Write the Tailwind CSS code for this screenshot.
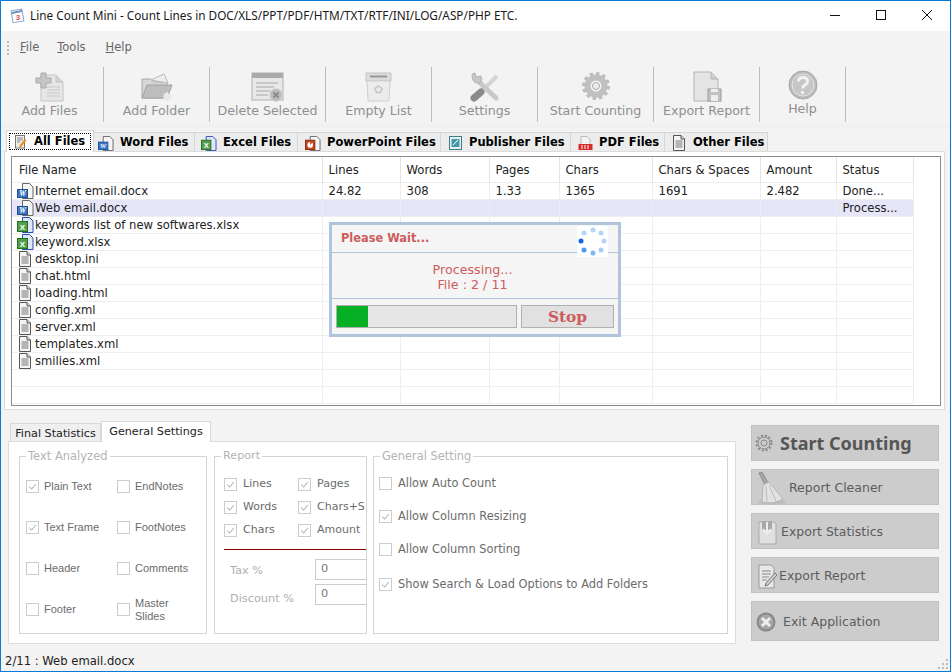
<!DOCTYPE html>
<html>
<head>
<meta charset="UTF-8">
<title>Line Count Mini</title>
<script src="https://cdn.jsdelivr.net/npm/@tailwindcss/browser@4"></script>
</head>
<body class="m-0 overflow-hidden bg-[#f3f3f3]">

<!-- shared icons -->
<svg class="hidden">
  <symbol id="doc-lines" viewBox="0 0 14 16">
    <path d="M1.5.5h7.5l3.500 3.500v11.500h-11z" fill="#f4f4f4" stroke="#555"/>
    <path d="M9 .5v3.500h3.500" fill="#ddd" stroke="#555"/>
    <path d="M3.500 6h7M3.500 8h7M3.500 10h7M3.500 12h7" stroke="#777"/>
  </symbol>
  <symbol id="doc-word" viewBox="0 0 17 16">
    <path d="M5.500.5h7l3.500 3.500v11.500h-10.500z" fill="#f6f6f6" stroke="#666"/>
    <rect x="0.500" y="6.500" width="10" height="8" fill="#3f78c2" stroke="#1f4f96"/>
    <text x="5.500" y="13" text-anchor="middle" font-size="7.500" font-family="Liberation Serif" font-style="italic" font-weight="700" fill="#fff">W</text>
  </symbol>
  <symbol id="doc-excel" viewBox="0 0 17 16">
    <path d="M5.500.5h7l3.500 3.500v11.500h-10.500z" fill="#dfe6f6" stroke="#2a4fb0"/>
    <rect x="0.500" y="4.500" width="10" height="10" fill="#54a04a" stroke="#20702a"/>
    <text x="5.500" y="12.500" text-anchor="middle" font-size="8" font-family="Liberation Sans" font-weight="700" fill="#fff">X</text>
  </symbol>
  <symbol id="check" viewBox="0 0 13 13">
    <path d="M2.500 6.500l3 3 5-6" fill="none" stroke="#b4b4b4" stroke-width="1.200"/>
  </symbol>
</svg>

<div class="w-[951px] h-[672px] flex flex-col overflow-hidden border border-[#0a7ad6] bg-[#f3f3f3] font-['DejaVu_Sans',sans-serif] text-[12px] relative">

  <!-- title bar -->
  <div class="h-[30px] shrink-0 bg-white flex items-center">
    <svg class="ml-[9px] w-[15px] h-[16px]" viewBox="0 0 15 16">
      <rect x="2" y="2" width="11" height="12" fill="#fff" stroke="#8aa4c8" transform="rotate(-10 7 8)"/>
      <path d="M2 4l10-2v2l-10 2z" fill="#6d8fc4"/>
      <text x="8" y="12" text-anchor="middle" font-size="8" font-family="Liberation Sans" font-weight="700" fill="#e05050">3</text>
    </svg>
    <span class="ml-[5px] font-['Noto_Sans',sans-serif] text-[11.800px] text-[#1a1a1a] whitespace-nowrap">Line Count Mini - Count Lines in DOC/XLS/PPT/PDF/HTM/TXT/RTF/INI/LOG/ASP/PHP ETC.</span>
    <div class="ml-auto flex items-center">
      <svg class="w-[46px] h-[30px]" viewBox="0 0 46 30"><path d="M18 14.500h10" stroke="#111"/></svg>
      <svg class="w-[46px] h-[30px]" viewBox="0 0 46 30"><rect x="18.500" y="9.500" width="9" height="9" fill="none" stroke="#111"/></svg>
      <svg class="w-[46px] h-[30px]" viewBox="0 0 46 30"><path d="M18 9l10 10M28 9l-10 10" stroke="#111"/></svg>
    </div>
  </div>

  <!-- menu -->
  <div class="h-[31px] shrink-0 pt-[2px] flex items-center text-[#666] text-[11.500px]">
    <div class="ml-[6px] w-[2px] h-[14px] border-l-2 border-dotted border-[#bbb]"></div>
    <span class="ml-[11px]"><u>F</u>ile</span>
    <span class="ml-[18px]"><u>T</u>ools</span>
    <span class="ml-[20px]"><u>H</u>elp</span>
  </div>

  <!-- toolbar -->
  <div class="h-[65px] shrink-0 pt-[5px] flex text-[12.600px] text-[#8f8f8f] border-b border-[#ededed]">
    <div class="w-[103px] h-[55px] pr-[5px] border-r border-[#bdbdbd] flex flex-col items-center">
      <svg class="w-[30px] h-[30px] mt-[5px] shrink-0" viewBox="0 0 30 30">
        <path d="M6 3h15l7 7v19H6z" fill="#e6e6e6" stroke="#c4c4c4"/>
        <path d="M21 3v7h7" fill="#d2d2d2" stroke="#c4c4c4"/>
        <path d="M12 15h13M12 18h13M12 21h13M12 24h13" stroke="#c8c8c8"/>
        <path d="M6 1h5v5h5v5h-5v5h-5v-5h-5v-5h5z" fill="#c6c6c6" stroke="#a8a8a8"/>
      </svg>
      <span class="mt-[1px] leading-[16px] whitespace-nowrap">Add Files</span>
    </div>
    <div class="w-[106px] h-[55px] border-r border-[#bdbdbd] flex flex-col items-center">
      <svg class="w-[32px] h-[30px] mt-[5px] shrink-0" viewBox="0 0 32 30">
        <path d="M1 7h9l3 3h13v16H1z" fill="#d6d6d6" stroke="#a8a8a8"/>
        <path d="M10 8l13-6 4 9z" fill="#eee" stroke="#bbb"/>
        <path d="M1 26l5-13h25l-5 13z" fill="#bdbdbd" stroke="#a0a0a0"/>
        <path d="M26 20v9M22 24.500h9M23 21.500l6 6M29 21.500l-6 6" stroke="#e8e8e8" stroke-width="2"/>
      </svg>
      <span class="mt-[1px] leading-[16px] whitespace-nowrap">Add Folder</span>
    </div>
    <div class="w-[116px] h-[55px] border-r border-[#bdbdbd] flex flex-col items-center">
      <svg class="w-[33px] h-[30px] mt-[5px] shrink-0" viewBox="0 0 33 30">
        <rect x="1" y="1" width="31" height="27" fill="#e8e8e8" stroke="#b0b0b0"/>
        <rect x="1" y="1" width="31" height="5" fill="#aaa"/>
        <path d="M5 11h22M5 15h18M5 19h14M5 23h12" stroke="#c8c8c8" stroke-width="2"/>
        <circle cx="25" cy="23" r="6.500" fill="#bcbcbc" stroke="#ddd"/>
        <path d="M22.500 20.500l5 5M27.500 20.500l-5 5" stroke="#8c8c8c" stroke-width="2"/>
      </svg>
      <span class="mt-[1px] leading-[16px] whitespace-nowrap">Delete Selected</span>
    </div>
    <div class="w-[106px] h-[55px] border-r border-[#bdbdbd] flex flex-col items-center">
      <svg class="w-[27px] h-[30px] mt-[5px] shrink-0" viewBox="0 0 27 30">
        <path d="M1 1h25v8H1z" fill="#dcdcdc" stroke="#c4c4c4"/>
        <path d="M5 4.500h17" stroke="#999" stroke-width="2"/>
        <path d="M2 9h23l-1 19q0 1-1 1H4q-1 0-1-1z" fill="#ececec" stroke="#cfcfcf"/>
        <path d="M13.500 14l3.500 2.500-1.500 4h-4l-1.500-4z" fill="none" stroke="#c4c4c4" stroke-width="1.500"/>
      </svg>
      <span class="mt-[1px] leading-[16px] whitespace-nowrap">Empty List</span>
    </div>
    <div class="w-[106px] h-[55px] border-r border-[#bdbdbd] flex flex-col items-center">
      <svg class="w-[30px] h-[30px] mt-[5px] shrink-0" viewBox="0 0 30 30">
        <path d="M27 4L13 18" stroke="#d4d4d4" stroke-width="4"/>
        <path d="M8 9l18 17" stroke="#c8c8c8" stroke-width="5" stroke-linecap="round"/>
        <path d="M2 4q0 8 8 7 3-3 1-7L6 5 5 1Q2 1 2 4z" fill="#c8c8c8" stroke="#b4b4b4"/>
        <path d="M11 20l-7 6" stroke="#8a8a8a" stroke-width="7" stroke-linecap="round"/>
      </svg>
      <span class="mt-[1px] leading-[16px] whitespace-nowrap">Settings</span>
    </div>
    <div class="w-[116px] h-[55px] border-r border-[#bdbdbd] flex flex-col items-center">
      <svg class="w-[30px] h-[30px] mt-[5px] shrink-0" viewBox="0 0 30 30">
        <circle cx="15" cy="14" r="8.500" fill="none" stroke="#c0c0c0" stroke-width="6"/>
        <circle cx="15" cy="14" r="12.500" fill="none" stroke="#bcbcbc" stroke-width="3" stroke-dasharray="3.500 3"/>
        <circle cx="15" cy="14" r="3.500" fill="#ececec" stroke="#aaa"/>
      </svg>
      <span class="mt-[1px] leading-[16px] whitespace-nowrap">Start Counting</span>
    </div>
    <div class="w-[106px] h-[55px] border-r border-[#bdbdbd] flex flex-col items-center">
      <svg class="w-[30px] h-[31px] mt-[4px] shrink-0" viewBox="0 0 30 31">
        <path d="M2 1h17l7 7v22H2z" fill="#e4e4e4" stroke="#b4b4b4"/>
        <path d="M19 1v7h7" fill="#d0d0d0" stroke="#b4b4b4"/>
        <rect x="16" y="18" width="13" height="12" fill="#c2c2c2" stroke="#9c9c9c"/>
        <rect x="19" y="24" width="7" height="6" fill="#eee"/>
        <rect x="19" y="18" width="7" height="3" fill="#eee"/>
      </svg>
      <span class="mt-[1px] leading-[16px] whitespace-nowrap">Export Report</span>
    </div>
    <div class="w-[86px] h-[55px] border-r border-[#bdbdbd] flex flex-col items-center">
      <svg class="w-[30px] h-[30px] mt-[3px] shrink-0" viewBox="0 0 30 30">
        <circle cx="15" cy="15" r="14" fill="#bcbcbc" stroke="#a8a8a8"/>
        <circle cx="15" cy="15" r="11" fill="#c6c6c6" stroke="#e4e4e4"/>
        <path d="M10.500 11.500q0-4 4.500-4t4.500 4q0 2-2.500 3.500t-2 3.500" fill="none" stroke="#f2f2f2" stroke-width="3"/>
        <circle cx="14.500" cy="22.500" r="1.800" fill="#f2f2f2"/>
      </svg>
      <span class="mt-[1px] leading-[16px] whitespace-nowrap">Help</span>
    </div>
  </div>

  <!-- file type tabs -->
  <div class="h-[24px] shrink-0 pl-[5px] flex items-end font-bold text-[11.500px] text-black whitespace-nowrap">
    <div class="relative z-10 -mb-[1px] w-[88px] h-[22px] bg-white border border-b-0 border-[#d6d6d6] p-[2px]">
      <div class="h-full pt-[1px] border border-dotted border-black flex items-center pl-[4px] gap-[7px]">
        <svg class="w-[13px] h-[14px]" viewBox="0 0 13 14">
          <rect x="1.500" y=".5" width="9" height="12.500" fill="#eee" stroke="#777"/>
          <path d="M3 3h6M3 5h6M3 7h3" stroke="#888"/>
          <path d="M5 11l6-7 1.500 1.500-6 7z" fill="#f08a1c"/>
        </svg>
        <span>All Files</span>
      </div>
    </div>
    <div class="w-[101px] h-[19px] pt-[2px] bg-[#ececec] border-t border-r border-[#d6d6d6] flex items-center pl-[4px] gap-[6px]">
      <svg class="w-[16px] h-[15px]"><use href="#doc-word"/></svg><span>Word Files</span>
    </div>
    <div class="w-[103px] h-[19px] pt-[2px] bg-[#ececec] border-t border-r border-[#d6d6d6] flex items-center pl-[6px] gap-[6px]">
      <svg class="w-[16px] h-[15px]"><use href="#doc-excel"/></svg><span>Excel Files</span>
    </div>
    <div class="w-[143px] h-[19px] pt-[2px] bg-[#ececec] border-t border-r border-[#d6d6d6] flex items-center pl-[7px] gap-[6px]">
      <svg class="w-[16px] h-[15px]" viewBox="0 0 17 16">
        <path d="M5.500.5h7l3.500 3.500v11.500h-10.500z" fill="#f6f6f6" stroke="#666"/>
        <rect x=".5" y="4.500" width="10" height="10" fill="#c8431c" stroke="#8a2a10"/>
        <circle cx="5.500" cy="9.500" r="3" fill="#fff"/>
        <path d="M5.500 9.500v-3h3z" fill="#c8431c"/>
      </svg>
      <span>PowerPoint Files</span>
    </div>
    <div class="w-[130px] h-[19px] pt-[2px] bg-[#ececec] border-t border-r border-[#d6d6d6] flex items-center pl-[8px] gap-[7px]">
      <svg class="w-[13px] h-[14px]" viewBox="0 0 13 14">
        <rect x=".5" y=".5" width="12" height="13" fill="#e8f0f0" stroke="#3b7f8c"/>
        <rect x="2.500" y="3" width="8" height="8" fill="#4b9aa8"/>
        <path d="M4 9l5-5" stroke="#fff"/>
      </svg>
      <span>Publisher Files</span>
    </div>
    <div class="w-[94px] h-[19px] pt-[2px] bg-[#ececec] border-t border-r border-[#d6d6d6] flex items-center pl-[7px] gap-[6px]">
      <svg class="w-[15px] h-[15px]" viewBox="0 0 15 15">
        <path d="M3 .5h6l3 3v6H3z" fill="#f4f4f4" stroke="#bbb"/>
        <rect x=".5" y="8" width="14" height="6" fill="#d92b2b"/>
        <path d="M3 10h9M3 12h9" stroke="#fff" stroke-dasharray="2 1"/>
      </svg>
      <span>PDF Files</span>
    </div>
    <div class="w-[103px] h-[19px] pt-[2px] bg-[#ececec] border-t border-r border-[#d6d6d6] flex items-center pl-[7px] gap-[7px]">
      <svg class="w-[14px] h-[16px]"><use href="#doc-lines"/></svg><span>Other Files</span>
    </div>
  </div>

  <!-- file list -->
  <div class="h-[259px] w-[941px] shrink-0 bg-white ml-[3px] pl-[6px] pr-[3px] pt-[4px] border border-[#dcdcdc] text-[11.600px] leading-[15px] text-[#222]">
    <div class="h-[250px] border border-[#8c8c8c] overflow-hidden">
      <table class="table-fixed w-[901px] [&_td]:border-r [&_td]:border-[#eeeeee] [&_td]:px-[6px] [&_td]:pt-[1px] [&_td]:pb-0 [&_td]:h-[17px] [&_td]:whitespace-nowrap [&_tr]:border-b [&_tr]:border-[#eeeeee]">
        <colgroup>
          <col class="w-[310px]"><col class="w-[78px]"><col class="w-[89px]"><col class="w-[70px]"><col class="w-[93px]"><col class="w-[108px]"><col class="w-[76px]"><col class="w-[77px]">
        </colgroup>
        <thead>
          <tr class="h-[25px]">
            <th class="font-normal text-left pl-[7px] pt-[3px] border-r border-[#e4e4e4]">File Name</th>
            <th class="font-normal text-left px-[6px] pt-[3px] border-r border-[#e4e4e4]">Lines</th>
            <th class="font-normal text-left px-[6px] pt-[3px] border-r border-[#e4e4e4]">Words</th>
            <th class="font-normal text-left px-[6px] pt-[3px] border-r border-[#e4e4e4]">Pages</th>
            <th class="font-normal text-left px-[6px] pt-[3px] border-r border-[#e4e4e4]">Chars</th>
            <th class="font-normal text-left px-[6px] pt-[3px] border-r border-[#e4e4e4]">Chars &amp; Spaces</th>
            <th class="font-normal text-left px-[6px] pt-[3px] border-r border-[#e4e4e4]">Amount</th>
            <th class="font-normal text-left px-[6px] pt-[3px] border-r border-[#e4e4e4]">Status</th>
          </tr>
        </thead>
        <tbody>
          <tr>
            <td><div class="flex items-center gap-[1px] -ml-[1px] h-[15px]"><svg class="w-[17px] h-[16px] shrink-0"><use href="#doc-word"/></svg>Internet email.docx</div></td>
            <td>24.82</td><td>308</td><td>1.33</td><td>1365</td><td>1691</td><td>2.482</td><td>Done...</td>
          </tr>
          <tr class="bg-[#e6e6f8]">
            <td><div class="flex items-center gap-[1px] -ml-[1px] h-[15px]"><svg class="w-[17px] h-[16px] shrink-0"><use href="#doc-word"/></svg>Web email.docx</div></td>
            <td></td><td></td><td></td><td></td><td></td><td></td><td>Process...</td>
          </tr>
          <tr>
            <td><div class="flex items-center gap-[1px] -ml-[1px] h-[15px]"><svg class="w-[17px] h-[16px] shrink-0"><use href="#doc-excel"/></svg>keywords list of new softwares.xlsx</div></td>
            <td></td><td></td><td></td><td></td><td></td><td></td><td></td>
          </tr>
          <tr>
            <td><div class="flex items-center gap-[1px] -ml-[1px] h-[15px]"><svg class="w-[17px] h-[16px] shrink-0"><use href="#doc-excel"/></svg>keyword.xlsx</div></td>
            <td></td><td></td><td></td><td></td><td></td><td></td><td></td>
          </tr>
          <tr>
            <td><div class="flex items-center gap-[3px] h-[15px]"><svg class="w-[14px] h-[16px] shrink-0"><use href="#doc-lines"/></svg>desktop.ini</div></td>
            <td></td><td></td><td></td><td></td><td></td><td></td><td></td>
          </tr>
          <tr>
            <td><div class="flex items-center gap-[3px] h-[15px]"><svg class="w-[14px] h-[16px] shrink-0"><use href="#doc-lines"/></svg>chat.html</div></td>
            <td></td><td></td><td></td><td></td><td></td><td></td><td></td>
          </tr>
          <tr>
            <td><div class="flex items-center gap-[3px] h-[15px]"><svg class="w-[14px] h-[16px] shrink-0"><use href="#doc-lines"/></svg>loading.html</div></td>
            <td></td><td></td><td></td><td></td><td></td><td></td><td></td>
          </tr>
          <tr>
            <td><div class="flex items-center gap-[3px] h-[15px]"><svg class="w-[14px] h-[16px] shrink-0"><use href="#doc-lines"/></svg>config.xml</div></td>
            <td></td><td></td><td></td><td></td><td></td><td></td><td></td>
          </tr>
          <tr>
            <td><div class="flex items-center gap-[3px] h-[15px]"><svg class="w-[14px] h-[16px] shrink-0"><use href="#doc-lines"/></svg>server.xml</div></td>
            <td></td><td></td><td></td><td></td><td></td><td></td><td></td>
          </tr>
          <tr>
            <td><div class="flex items-center gap-[3px] h-[15px]"><svg class="w-[14px] h-[16px] shrink-0"><use href="#doc-lines"/></svg>templates.xml</div></td>
            <td></td><td></td><td></td><td></td><td></td><td></td><td></td>
          </tr>
          <tr>
            <td><div class="flex items-center gap-[3px] h-[15px]"><svg class="w-[14px] h-[16px] shrink-0"><use href="#doc-lines"/></svg>smilies.xml</div></td>
            <td></td><td></td><td></td><td></td><td></td><td></td><td></td>
          </tr>
          <tr><td></td><td></td><td></td><td></td><td></td><td></td><td></td><td></td></tr>
          <tr class="border-b-0"><td></td><td></td><td></td><td></td><td></td><td></td><td></td><td></td></tr>
        </tbody>
      </table>
    </div>
  </div>

  <!-- lower area -->
  <div class="flex-1 flex min-h-0 pl-[7px] pt-[11px]">
    <div class="w-[728px] shrink-0">
      <div class="h-[20px] flex items-end pl-[2px] text-[11.200px] text-[#222]">
        <div class="w-[91px] h-[18px] pt-[3px] bg-[#efefef] border border-b-0 border-[#d9d9d9] flex items-center justify-center">Final Statistics</div>
        <div class="relative z-10 -mb-[1px] w-[110px] h-[21px] bg-white border border-b-0 border-[#d9d9d9] flex items-center justify-center">General Settings</div>
      </div>
      <div class="h-[203px] bg-white border border-[#dcdcdc] pl-[10px] pt-[7px] flex text-[#6b6b6b]">

        <fieldset class="w-[188px] min-w-0 shrink-0 h-[185px] border border-[#d4d4d4] pl-[6px] pt-[3px] font-['Liberation_Sans',sans-serif] text-[11px]">
          <legend class="px-[2px] leading-[14px] text-[#b4b4b4] text-[11.500px] font-['DejaVu_Sans',sans-serif]">Text Analyzed</legend>
          <div class="grid grid-cols-[91px_1fr] grid-rows-[41px_41px_41px_41px] items-center">
            <label class="flex items-center gap-[5px]"><span class="w-[13px] h-[13px] border border-[#ccc]"><svg class="w-full h-full"><use href="#check"/></svg></span>Plain Text</label>
            <label class="flex items-center gap-[5px]"><span class="w-[13px] h-[13px] border border-[#ccc]"></span>EndNotes</label>
            <label class="flex items-center gap-[5px]"><span class="w-[13px] h-[13px] border border-[#ccc]"><svg class="w-full h-full"><use href="#check"/></svg></span>Text Frame</label>
            <label class="flex items-center gap-[5px]"><span class="w-[13px] h-[13px] border border-[#ccc]"></span>FootNotes</label>
            <label class="flex items-center gap-[5px]"><span class="w-[13px] h-[13px] border border-[#ccc]"></span>Header</label>
            <label class="flex items-center gap-[5px]"><span class="w-[13px] h-[13px] border border-[#ccc]"></span>Comments</label>
            <label class="flex items-center gap-[5px]"><span class="w-[13px] h-[13px] border border-[#ccc]"></span>Footer</label>
            <label class="flex items-center gap-[5px]"><span class="w-[13px] h-[13px] border border-[#ccc] shrink-0"></span><span class="leading-[13px]">Master<br>Slides</span></label>
          </div>
        </fieldset>

        <fieldset class="w-[153px] min-w-0 shrink-0 ml-[7px] h-[185px] border border-[#d4d4d4] pl-[9px] pt-[10px] overflow-hidden text-[11px]">
          <legend class="-ml-[3px] px-[2px] leading-[14px] text-[#b4b4b4] text-[11.200px]">Report</legend>
          <div class="grid grid-cols-[74px_1fr] grid-rows-[23px_23px_23px] items-center whitespace-nowrap">
            <label class="flex items-center gap-[6px]"><span class="w-[13px] h-[13px] border border-[#ccc] shrink-0"><svg class="w-full h-full"><use href="#check"/></svg></span>Lines</label>
            <label class="flex items-center gap-[6px]"><span class="w-[13px] h-[13px] border border-[#ccc] shrink-0"><svg class="w-full h-full"><use href="#check"/></svg></span>Pages</label>
            <label class="flex items-center gap-[6px]"><span class="w-[13px] h-[13px] border border-[#ccc] shrink-0"><svg class="w-full h-full"><use href="#check"/></svg></span>Words</label>
            <label class="flex items-center gap-[6px]"><span class="w-[13px] h-[13px] border border-[#ccc] shrink-0"><svg class="w-full h-full"><use href="#check"/></svg></span>Chars+S</label>
            <label class="flex items-center gap-[6px]"><span class="w-[13px] h-[13px] border border-[#ccc] shrink-0"><svg class="w-full h-full"><use href="#check"/></svg></span>Chars</label>
            <label class="flex items-center gap-[6px]"><span class="w-[13px] h-[13px] border border-[#ccc] shrink-0"><svg class="w-full h-full"><use href="#check"/></svg></span>Amount</label>
          </div>
          <div class="mt-[7px] border-t border-[#8b0000]"></div>
          <div class="mt-[9px] flex flex-col gap-[4px] text-[11.300px] text-[#b0b0b0]">
            <div class="flex items-start h-[21px]"><span class="w-[91px] shrink-0 pl-[6px] pt-[4px]">Tax %</span><div class="w-[70px] shrink-0 h-[21px] border border-[#ccc] pl-[5px] text-[#777] leading-[18px]">0</div></div>
            <div class="flex items-start h-[21px]"><span class="w-[91px] shrink-0 pl-[6px] pt-[7px]">Discount %</span><div class="w-[70px] shrink-0 h-[21px] border border-[#ccc] pl-[5px] text-[#777] leading-[18px]">0</div></div>
          </div>
        </fieldset>

        <fieldset class="w-[355px] min-w-0 shrink-0 ml-[6px] h-[185px] border border-[#d4d4d4] pl-[5px] text-[11.400px]">
          <legend class="ml-[1px] px-[2px] leading-[14px] text-[#b4b4b4]">General Setting</legend>
          <div class="flex flex-col gap-[20px] mt-[14px]">
            <label class="flex items-center gap-[6px] h-[13px]"><span class="w-[13px] h-[13px] border border-[#ccc]"></span>Allow Auto Count</label>
            <label class="flex items-center gap-[6px] h-[13px]"><span class="w-[13px] h-[13px] border border-[#ccc]"><svg class="w-full h-full"><use href="#check"/></svg></span>Allow Column Resizing</label>
            <label class="flex items-center gap-[6px] h-[13px]"><span class="w-[13px] h-[13px] border border-[#ccc]"></span>Allow Column Sorting</label>
            <label class="flex items-center gap-[6px] h-[13px] mt-[2px]"><span class="w-[13px] h-[13px] border border-[#ccc]"><svg class="w-full h-full"><use href="#check"/></svg></span>Show Search &amp; Load Options to Add Folders</label>
          </div>
        </fieldset>
      </div>
    </div>

    <!-- action buttons -->
    <div class="w-[188px] ml-[15px] mt-[4px] flex flex-col gap-[8px] text-[12.500px] text-[#5c5c5c]">
      <div class="h-[36px] bg-[#cccccc] border border-[#c0c0c0] flex items-center pl-[3px]">
        <svg class="w-[18px] h-[18px]" viewBox="0 0 18 18">
          <circle cx="9" cy="9" r="6" fill="none" stroke="#888" stroke-width="1"/>
          <circle cx="9" cy="9" r="3" fill="none" stroke="#888"/>
          <circle cx="9" cy="9" r="7.500" fill="none" stroke="#888" stroke-width="2" stroke-dasharray="2 2"/>
        </svg>
        <span class="ml-[7px] font-bold text-[18px] font-['Noto_Sans',sans-serif] text-[#555]">Start Counting</span>
      </div>
      <div class="h-[36px] pt-[2px] bg-[#cccccc] border border-[#c0c0c0] flex items-center pl-[3px]">
        <svg class="w-[32px] h-[33px] -mr-[4px]" viewBox="0 0 32 33">
          <ellipse cx="17" cy="30" rx="14" ry="2.500" fill="#bdbdbd"/>
          <path d="M4 1l3-1 6 11-3 2z" fill="#a8a8a8" stroke="#8c8c8c"/>
          <path d="M8 13l6-3 14 17q-10 6-21 3z" fill="#e2e2e2" stroke="#b4b4b4"/>
          <path d="M11 14l1 16M14 13l7 16" stroke="#bbb"/>
        </svg>
        <span class="ml-[6px]">Report Cleaner</span>
      </div>
      <div class="h-[36px] pt-[2px] bg-[#cccccc] border border-[#c0c0c0] flex items-center pl-[4px]">
        <svg class="w-[21px] h-[27px]" viewBox="0 0 21 27">
          <path d="M3 3h15l2 2v20H3z" fill="#e0e0e0" stroke="#aaa"/>
          <rect x="6" y="2" width="10" height="9" fill="#a8a8a8"/>
          <path d="M11 3v11M7 10l4 5 4-5" fill="none" stroke="#eee" stroke-width="2"/>
        </svg>
        <span class="ml-[4px]">Export Statistics</span>
      </div>
      <div class="h-[36px] pt-[2px] bg-[#cccccc] border border-[#c0c0c0] flex items-center pl-[6px]">
        <svg class="w-[19px] h-[25px]" viewBox="0 0 19 25">
          <path d="M1 1h12l3 3v20H1z" fill="#e8e8e8" stroke="#999"/>
          <path d="M4 7h9M4 10h9M4 13h7M4 16h5" stroke="#888"/>
          <path d="M8 19l9-10 2 2-9 10-3 1z" fill="#ccc" stroke="#777"/>
        </svg>
        <span class="ml-[2px]">Export Report</span>
      </div>
      <div class="h-[40px] pt-[2px] bg-[#cccccc] border border-[#c0c0c0] flex items-center pl-[4px]">
        <svg class="w-[20px] h-[20px]" viewBox="0 0 20 20">
          <circle cx="10" cy="10" r="9.500" fill="#888"/>
          <circle cx="10" cy="10" r="7.500" fill="#a6a6a6"/>
          <path d="M6 6l8 8M14 6l-8 8" stroke="#eee" stroke-width="3"/>
        </svg>
        <span class="ml-[7px]">Exit Application</span>
      </div>
    </div>
  </div>

  <!-- status bar -->
  <div class="h-[22px] shrink-0 pt-[3px] flex items-center pl-[4px] text-[11.600px] text-[#222]">2/11 : Web email.docx</div>

  <!-- please wait dialog -->
  <div class="absolute left-[328px] top-[221px] w-[292px] h-[115px] border-[3px] border-[#b0c4de] bg-[#f5f5f5] flex flex-col text-[#cd5c5c]">
    <div class="h-[28px] shrink-0 pl-[9px] pt-[5px] font-bold text-[11.400px] border-b border-[#b0c4de] relative">
      Please Wait...
      <svg class="absolute right-[10px] top-[1px] w-[31px] h-[31px] bg-white" viewBox="0 0 31 31">
        <circle cx="16" cy="4" r="2.500" fill="#b3d4fb"/>
        <circle cx="24" cy="7" r="2.500" fill="#b3d4fb"/>
        <circle cx="27" cy="15" r="2.500" fill="#b3d4fb"/>
        <circle cx="24" cy="24" r="2.500" fill="#a8ccf8"/>
        <circle cx="16" cy="27" r="2.500" fill="#7fb8fa"/>
        <circle cx="7" cy="24" r="2.500" fill="#4c97f2"/>
        <circle cx="4" cy="15" r="2.500" fill="#0f66e6"/>
        <circle cx="7" cy="7" r="2.500" fill="#b3d4fb"/>
      </svg>
    </div>
    <div class="h-[46px] shrink-0 border-b border-[#b0c4de] flex flex-col items-center justify-center text-[12.700px] leading-[15px] pt-[3px] pr-[5px]">
      <span>Processing...</span>
      <span>File : 2 / 11</span>
    </div>
    <div class="flex gap-[4px] pl-[4px] pt-[6px]">
      <div class="w-[181px] h-[23px] border border-[#b0b0b0] bg-[#e6e6e6]"><div class="w-[31px] h-full bg-[#06b025]"></div></div>
      <div class="w-[93px] h-[23px] pt-[2px] border border-[#b0b0b0] bg-[#e1e1e1] flex items-center justify-center font-['DejaVu_Serif',serif] font-bold text-[15.300px]">Stop</div>
    </div>
  </div>

  <!-- resize grip -->
  <svg class="absolute right-[1px] bottom-[1px] w-[12px] h-[12px]" viewBox="0 0 12 12">
    <path d="M9 1h2v2H9zM5 5h2v2H5zM9 5h2v2H9zM1 9h2v2H1zM5 9h2v2H5zM9 9h2v2H9z" fill="#bdbdbd"/>
  </svg>
</div>
</body>
</html>
